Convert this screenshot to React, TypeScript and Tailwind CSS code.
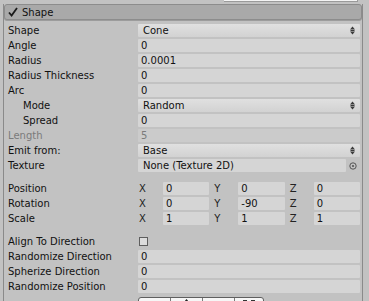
import React from "react";

const Arrows = () => (
  <svg width="5" height="9" viewBox="0 0 5 9" className="block">
    <path d="M2.5 0.5 L5 3.5 H0 Z" fill="#3a3a3a" />
    <rect x="0.5" y="4" width="4" height="1" fill="#3a3a3a" />
    <path d="M0 5.5 H5 L2.5 8.5 Z" fill="#3a3a3a" />
  </svg>
);

function Row({
  label,
  indent,
  disabled,
  children,
}: {
  label: string;
  indent?: boolean;
  disabled?: boolean;
  children?: React.ReactNode;
}) {
  return (
    <div className="flex h-[15px] items-center">
      <div
        className={`w-[134px] shrink-0 whitespace-nowrap ${indent ? "pl-[19px]" : "pl-[4px]"} ${
          disabled ? "text-[#7b7b7b]" : "text-[#111]"
        }`}
      >
        {label}
      </div>
      <div className="flex-1 min-w-0 pr-[2px]">{children}</div>
    </div>
  );
}

const Field = ({ v, disabled }: { v: string; disabled?: boolean }) => (
  <div
    className={`h-[13px] rounded-[1px] pl-[3px] leading-[13px] whitespace-nowrap ${
      disabled ? "bg-[#cbcbcb] text-[#7b7b7b]" : "bg-[#d5d5d5] text-[#111]"
    }`}
  >
    {v}
  </div>
);

const Dropdown = ({ v }: { v: string }) => (
  <div className="flex h-[13px] items-center rounded-[1px] bg-gradient-to-b from-[#e0e0e0] to-[#d2d2d2] pl-[5px] pr-[5px] leading-[13px] text-[#111]">
    <span className="flex-1">{v}</span>
    <Arrows />
  </div>
);

const Vec = ({ x, y, z }: { x: string; y: string; z: string }) => (
  <div className="grid grid-cols-3 gap-[4px]">
    {[
      ["X", x],
      ["Y", y],
      ["Z", z],
    ].map(([l, val]) => (
      <div key={l} className="flex h-[13px] items-center">
        <div className="w-[25px] shrink-0 pl-[1px] text-[#222]">{l}</div>
        <div className="h-[13px] flex-1 rounded-[1px] bg-[#d5d5d5] pl-[3px] leading-[13px] text-[#111]">{val}</div>
      </div>
    ))}
  </div>
);

export default function App() {
  return (
    <div className="relative h-[301px] w-[369px] overflow-hidden bg-[#c2c2c2] font-['DejaVu_Sans',sans-serif] text-[10px]">
      {/* top strip: end of previous field */}
      <div className="h-[4px]">
        <div className="ml-[224px] h-[2px] w-[134px] border-b border-r border-[#9a9a9a] bg-[#f4f4f4]" />
      </div>
      <div className="ml-[3px] w-[360px] border-x border-[#8a8a8a]">
        {/* header */}
        <div className="flex h-[16px] items-center rounded-[3px] border border-[#8c8c8c] bg-[#a9a9a9] shadow-[0_1px_0_#9c9c9c]">
          <svg width="10" height="10" viewBox="0 0 10 10" className="ml-[3px] block">
            <path d="M1 5.5 L3.6 8.5 L9 1" fill="none" stroke="#1a1a1a" strokeWidth="1.8" />
          </svg>
          <span className="ml-[4px] text-[#111]">Shape</span>
        </div>
        <div className="mt-[3px]">
          <Row label="Shape">
            <Dropdown v="Cone" />
          </Row>
          <Row label="Angle">
            <Field v="0" />
          </Row>
          <Row label="Radius">
            <Field v="0.0001" />
          </Row>
          <Row label="Radius Thickness">
            <Field v="0" />
          </Row>
          <Row label="Arc">
            <Field v="0" />
          </Row>
          <Row label="Mode" indent>
            <Dropdown v="Random" />
          </Row>
          <Row label="Spread" indent>
            <Field v="0" />
          </Row>
          <Row label="Length" disabled>
            <Field v="5" disabled />
          </Row>
          <Row label="Emit from:">
            <Dropdown v="Base" />
          </Row>
          <Row label="Texture">
            <div className="flex h-[13px] items-center">
              <div className="h-[13px] flex-1 rounded-[1px] bg-[#d5d5d5] pl-[5px] leading-[13px] text-[#111]">
                None (Texture 2D)
              </div>
              <div className="flex w-[14px] justify-center">
                <svg width="8" height="8" viewBox="0 0 8 8" className="block">
                  <circle cx="4" cy="4" r="3.2" fill="none" stroke="#555" strokeWidth="1" />
                  <circle cx="4" cy="4" r="1.1" fill="#555" />
                </svg>
              </div>
            </div>
          </Row>
          <div className="h-[8px]" />
          <Row label="Position">
            <Vec x="0" y="0" z="0" />
          </Row>
          <Row label="Rotation">
            <Vec x="0" y="-90" z="0" />
          </Row>
          <Row label="Scale">
            <Vec x="1" y="1" z="1" />
          </Row>
          <div className="h-[8px]" />
          <Row label="Align To Direction">
            <div className="flex h-[13px] items-center pl-[1px]">
              <div className="h-[9px] w-[9px] border border-[#5e5e5e] bg-[#dcdcdc]" />
            </div>
          </Row>
          <Row label="Randomize Direction">
            <Field v="0" />
          </Row>
          <Row label="Spherize Direction">
            <Field v="0" />
          </Row>
          <Row label="Randomize Position">
            <Field v="0" />
          </Row>
          {/* edit mode buttons (top edge visible) */}
          <div className="mt-[3px] ml-[134px] flex h-[20px] w-[126px] overflow-hidden rounded-t-[3px] border border-[#5f5f5f] bg-[#f6f6f6]">
            <div className="w-[32px] border-r border-[#7a7a7a]" />
            <div className="flex w-[32px] justify-center border-r border-[#7a7a7a] pt-[1px]">
              <svg width="5" height="6" viewBox="0 0 5 6" className="block">
                <path d="M2.5 0 L5 3 H3 V6 H2 V3 H0 Z" fill="#222" />
              </svg>
            </div>
            <div className="flex w-[32px] justify-center border-r border-[#7a7a7a] pt-[3px]">
              <div className="h-[2px] w-[7px] bg-[#333]" />
            </div>
            <div className="flex flex-1 justify-center gap-[4px] pt-[2px]">
              <div className="h-[4px] w-[4px] border-l border-t border-[#333]" />
              <div className="h-[4px] w-[4px] border-r border-t border-[#333]" />
            </div>
          </div>
        </div>
      </div>
    </div>
  );
}
